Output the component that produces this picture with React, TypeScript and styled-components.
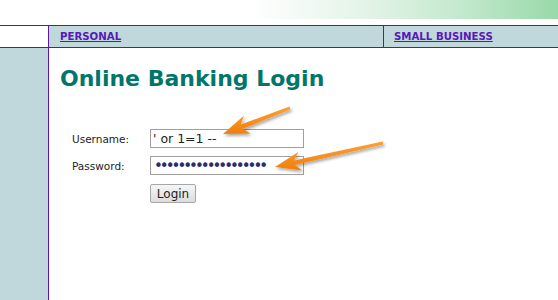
import React from "react";
import styled, { createGlobalStyle } from "styled-components";

const Global = createGlobalStyle`
  html, body { margin: 0; padding: 0; background: #fff; }
  body { font-family: "DejaVu Sans", Verdana, sans-serif; }
`;

const PURPLE = "#5a17b8";
const SIDE = "#c0d8dc";

const Page = styled.div`
  position: relative;
  width: 558px;
  height: 300px;
  overflow: hidden;
  display: flex;
  flex-direction: column;
`;

const Header = styled.div`
  height: 25px;
  display: flex;
  justify-content: flex-end;
`;

const Gradient = styled.div`
  width: 310px;
  height: 19px;
  background: linear-gradient(to right, #ffffff 0%, #e6f5ea 35%, #c2e8cc 70%, #98d9a9 100%);
`;

const NavRow = styled.div`
  display: flex;
  height: 21px;
  border-top: 1px solid ${PURPLE};
  border-bottom: 1px solid ${PURPLE};
`;

const NavCorner = styled.div`
  width: 48px;
  background: #fff;
  border-right: 1px solid ${PURPLE};
`;

const NavCell = styled.div<{ $w?: number }>`
  box-sizing: border-box;
  ${(p) => (p.$w ? `width: ${p.$w}px;` : "flex: 1;")}
  background: ${SIDE};
  padding-left: ${(p) => (p.$w ? 11 : 10)}px;
  display: flex;
  align-items: center;
  border-right: ${(p) => (p.$w ? `1px solid ${PURPLE}` : "none")};
`;

const NavLink = styled.a`
  font-family: "DejaVu Sans", Verdana, sans-serif;
  font-size: 10.2px;
  font-weight: bold;
  color: ${PURPLE};
  text-decoration: underline;
`;

const Body = styled.div`
  flex: 1;
  display: flex;
`;

const Sidebar = styled.div`
  width: 48px;
  background: ${SIDE};
  border-right: 1px solid ${PURPLE};
`;

const Main = styled.div`
  flex: 1;
  padding: 16px 0 0 11px;
`;

const Title = styled.h1`
  margin: 0;
  font-family: "DejaVu Sans", Verdana, sans-serif;
  font-size: 22px;
  font-weight: bold;
  color: #00766b;
  line-height: 30px;
`;

const Form = styled.div`
  margin: 35px 0 0 12px;
  display: grid;
  grid-template-columns: 78px 154px;
  row-gap: 8px;
  align-items: center;
`;

const Label = styled.label`
  font-family: "DejaVu Sans", Verdana, sans-serif;
  font-size: 10.5px;
  color: #222;
`;

const Input = styled.input`
  box-sizing: border-box;
  width: 154px;
  height: 19px;
  margin: 0;
  padding: 0 2px;
  border: 1px solid #a0a0a0;
  font-family: "DejaVu Sans", Verdana, sans-serif;
  font-size: 12.5px;
  color: #222;
  background: #fff;
  outline: none;
  &[type="password"] {
    color: #2d2d6e;
    font-size: 15px;
    letter-spacing: -3px;
    padding-left: 3px;
  }
`;

const Button = styled.button`
  grid-column: 2;
  justify-self: start;
  margin-top: 1px;
  box-sizing: border-box;
  width: 46px;
  height: 19px;
  padding: 0;
  border: 1px solid #a7a7a7;
  border-radius: 2px;
  background: linear-gradient(#f6f6f6, #dcdcdc);
  font-family: "DejaVu Sans", Verdana, sans-serif;
  font-size: 12px;
  color: #222;
`;

const Overlay = styled.svg`
  position: absolute;
  left: 0;
  top: 0;
  pointer-events: none;
`;

type ArrowProps = { x1: number; y1: number; x2: number; y2: number };

function Arrow({ x1, y1, x2, y2 }: ArrowProps) {
  const dx = x2 - x1;
  const dy = y2 - y1;
  const len = Math.hypot(dx, dy);
  const ux = dx / len;
  const uy = dy / len;
  const nx = -uy;
  const ny = ux;
  const headLen = 26;
  const headW = 9.5;
  const shaftW = 2.3;
  const bx = x2 - ux * headLen;
  const by = y2 - uy * headLen;
  const nb = x2 - ux * (headLen - 6);
  const nby = y2 - uy * (headLen - 6);
  const pts = [
    [x1 + nx * shaftW * 0.7, y1 + ny * shaftW * 0.7],
    [nb + nx * shaftW, nby + ny * shaftW],
    [bx + nx * headW, by + ny * headW],
    [x2, y2],
    [bx - nx * headW, by - ny * headW],
    [nb - nx * shaftW, nby - ny * shaftW],
    [x1 - nx * shaftW * 0.7, y1 - ny * shaftW * 0.7],
  ]
    .map((p) => p.map((v) => v.toFixed(1)).join(","))
    .join(" ");
  return <polygon points={pts} fill="url(#orange)" filter="url(#shadow)" strokeLinejoin="round" />;
}

export default function App() {
  return (
    <>
      <Global />
      <Page>
        <Header>
          <Gradient />
        </Header>
        <NavRow>
          <NavCorner />
          <NavCell $w={335}>
            <NavLink href="#">PERSONAL</NavLink>
          </NavCell>
          <NavCell>
            <NavLink href="#">SMALL BUSINESS</NavLink>
          </NavCell>
        </NavRow>
        <Body>
          <Sidebar />
          <Main>
            <Title>Online Banking Login</Title>
            <Form>
              <Label htmlFor="uid">Username:</Label>
              <Input id="uid" type="text" defaultValue="' or 1=1 --" />
              <Label htmlFor="passw">Password:</Label>
              <Input id="passw" type="password" defaultValue="xxxxxxxxxxxxxxxxxxx" />
              <Button type="button">Login</Button>
            </Form>
          </Main>
        </Body>
        <Overlay width={558} height={300} viewBox="0 0 558 300">
          <defs>
            <linearGradient id="orange" x1="0" y1="0" x2="0" y2="1">
              <stop offset="0" stopColor="#ffa033" />
              <stop offset="1" stopColor="#f07f0a" />
            </linearGradient>
            <filter id="shadow" x="-20%" y="-50%" width="140%" height="200%">
              <feDropShadow dx="1.5" dy="2" stdDeviation="1.5" floodColor="#000" floodOpacity="0.35" />
            </filter>
          </defs>
          <Arrow x1={290} y1={108} x2={223} y2={134} />
          <Arrow x1={383} y1={143} x2={275} y2={167} />
        </Overlay>
      </Page>
    </>
  );
}
